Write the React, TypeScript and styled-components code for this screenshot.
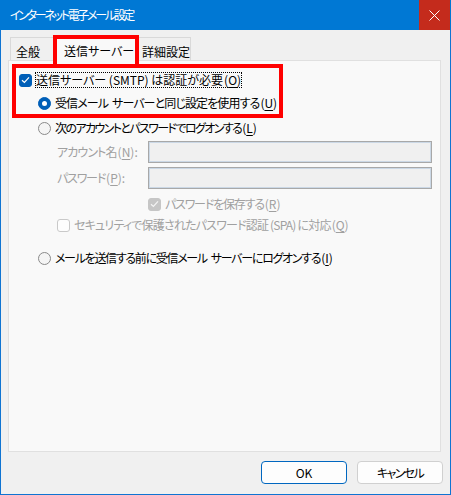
import React from "react";
import styled, { createGlobalStyle } from "styled-components";

const GlobalStyle = createGlobalStyle`
  html, body {
    margin: 0;
    padding: 0;
    background: #ffffff;
  }
  * {
    box-sizing: border-box;
  }
`

const Window = styled.div`
  position: relative;
  width: 451px;
  height: 495px;
  display: flex;
  flex-direction: column;
  background: #f0f0f0;
  border: 1px solid #0f74d2;
  border-top: none;
  font-family: "Noto Sans CJK JP", "Noto Sans", sans-serif;
  font-size: 12px;
  font-feature-settings: "palt";
  color: #000;
`

const TitleBar = styled.div`
  height: 30px;
  margin: 0 -1px;
  display: flex;
  align-items: center;
  justify-content: space-between;
  background: #0078d4;
  color: #fff;
  flex-shrink: 0;
`

const Title = styled.div`
  padding-left: 10px;
  line-height: 16px;
  letter-spacing: -2.3px;
`

const CloseButton = styled.div`
  width: 31px;
  height: 30px;
  margin-right: 1px;
  display: flex;
  align-items: center;
  justify-content: center;
  background: #c42b1c;
`

const TabStrip = styled.div`
  height: 30px;
  display: flex;
  align-items: flex-end;
  padding-left: 9px;
  flex-shrink: 0;
`

const Tab = styled.div<{ $active?: boolean; $w: number }>`
  position: relative;
  width: ${p => p.$w}px;
  height: ${p => (p.$active ? 26 : 23)}px;
  margin-bottom: ${p => (p.$active ? -1 : 0)}px;
  z-index: ${p => (p.$active ? 1 : 0)};
  padding: ${p => (p.$active ? "7px 0 0 8px" : "6px 0 0 5px")};
  line-height: 16px;
  white-space: nowrap;
  background: ${p => (p.$active ? "#f9f9f9" : "#f0f0f0")};
  border: 1px solid #d9d9d9;
  border-bottom: none;
`

const Panel = styled.div`
  flex: 1;
  margin: 0 9px 0 7px;
  padding: 0 8px 0 10px;
  display: flex;
  flex-direction: column;
  background: #f9f9f9;
  border: 1px solid #e0e0e0;
`

const Row = styled.div<{ $indent: number; $top: number }>`
  display: flex;
  align-items: center;
  height: 16px;
  margin-top: ${p => p.$top}px;
  padding-left: ${p => p.$indent}px;
  white-space: nowrap;
`

const Box = styled.span<{ $checked?: boolean; $disabled?: boolean }>`
  width: 13px;
  height: 13px;
  margin-right: 3px;
  flex-shrink: 0;
  display: flex;
  align-items: center;
  justify-content: center;
  border-radius: 3px;
  background: ${p =>
    p.$checked ? (p.$disabled ? "#c6c6c6" : "#005fb8") : "#fdfdfd"};
  border: 1px solid
    ${p => (p.$checked ? (p.$disabled ? "#c6c6c6" : "#005fb8") : p.$disabled ? "#c9c9c9" : "#8a8a8a")};
`

const Radio = styled.span<{ $checked?: boolean }>`
  position: relative;
  width: 13px;
  height: 13px;
  margin-right: 3px;
  flex-shrink: 0;
  border-radius: 50%;
  background: ${p => (p.$checked ? "#005fb8" : "#f5f5f5")};
  border: 1px solid ${p => (p.$checked ? "#005fb8" : "#8a8a8a")};

  &::after {
    content: "";
    display: ${p => (p.$checked ? "block" : "none")};
    position: absolute;
    left: 3px;
    top: 3px;
    width: 5px;
    height: 5px;
    border-radius: 50%;
    background: #fff;
  }
`

const Label = styled.span<{ $disabled?: boolean; $focus?: boolean; $ls?: number }>`
  line-height: 16px;
  padding: 0 1px;
  letter-spacing: ${p => p.$ls ?? 0}px;
  color: ${p => (p.$disabled ? "#a0a0a0" : "#000")};
  outline: ${p => (p.$focus ? "1px dotted #000" : "none")};
  outline-offset: -1px;
`

/* accelerator "(X)" keeps normal spacing */
const Key = styled.span`
  letter-spacing: 0;
  margin-left: 1px;

  u {
    text-underline-offset: 2px;
  }
`

const Space = styled.span`
  display: inline-block;
  width: 4px;
`

const FieldRow = styled.div<{ $top: number }>`
  display: flex;
  align-items: center;
  height: 22px;
  margin-top: ${p => p.$top}px;
  padding-left: 38px;
`

const FieldLabel = styled.span<{ $ls: number }>`
  width: 91px;
  color: #a0a0a0;
  line-height: 16px;
  letter-spacing: ${p => p.$ls}px;
  white-space: nowrap;
`

const TextBox = styled.div`
  width: 284px;
  height: 22px;
  background: #f0f0f0;
  border: 1px solid #a8a8a8;
  box-shadow: inset 0 0 0 1px #cbd8e6;
`

const Footer = styled.div`
  height: 42px;
  flex-shrink: 0;
  display: flex;
  justify-content: flex-end;
  align-items: flex-start;
  gap: 10px;
  padding: 9px 7px 0 0;
`

const Button = styled.div<{ $primary?: boolean; $ls?: number }>`
  width: 86px;
  height: 23px;
  display: flex;
  align-items: center;
  justify-content: center;
  line-height: 16px;
  letter-spacing: ${p => p.$ls ?? 0}px;
  background: #fdfdfd;
  border-radius: 4px;
  border: 1px solid ${p => (p.$primary ? "#0067c0" : "#d0d0d0")};
`

const Highlight = styled.div<{ $x: number; $y: number; $w: number; $h: number }>`
  position: absolute;
  left: ${p => p.$x}px;
  top: ${p => p.$y}px;
  width: ${p => p.$w}px;
  height: ${p => p.$h}px;
  border: 4px solid #ff0000;
  pointer-events: none;
  z-index: 5;
`

const Check = ({ color }: { color: string }) => (
  <svg width="9" height="8" viewBox="0 0 9 8">
    <path d="M1 4.2 L3.4 6.5 L8 1.4" fill="none" stroke={color} strokeWidth="1.2" />
  </svg>
)

const Acc = ({ k }: { k: string }) => (
  <Key>
    (<u>{k}</u>)
  </Key>
)

export default function App() {
  return (
    <>
      <GlobalStyle />
      <Window>
        <TitleBar>
          <Title>インターネット電子メール設定</Title>
          <CloseButton>
            <svg width="11" height="11" viewBox="0 0 11 11">
              <path d="M0.5 0.5 L10.5 10.5 M10.5 0.5 L0.5 10.5" stroke="#fff" strokeWidth="1" />
            </svg>
          </CloseButton>
        </TitleBar>

        <TabStrip>
          <Tab $w={45}>全般</Tab>
          <Tab $w={81} $active>送信サーバー</Tab>
          <Tab $w={55}>詳細設定</Tab>
        </TabStrip>

        <Panel>
          <Row $indent={0} $top={11}>
            <Box $checked><Check color="#fff" /></Box>
            <Label $focus>送信サーバー (SMTP) は認証が必要<Acc k="O" /></Label>
          </Row>
          <Row $indent={19} $top={7}>
            <Radio $checked />
            <Label $ls={-0.9}>受信メール<Space />サーバーと同じ設定を使用する<Acc k="U" /></Label>
          </Row>
          <Row $indent={19} $top={9}>
            <Radio />
            <Label $ls={-1.6}>次のアカウントとパスワードでログオンする<Acc k="L" /></Label>
          </Row>
          <FieldRow $top={5}>
            <FieldLabel $ls={-0.9}>アカウント名<Acc k="N" />:</FieldLabel>
            <TextBox />
          </FieldRow>
          <FieldRow $top={4}>
            <FieldLabel $ls={-1.2}>パスワード<Acc k="P" />:</FieldLabel>
            <TextBox />
          </FieldRow>
          <Row $indent={129} $top={7}>
            <Box $checked $disabled><Check color="#f4f4f4" /></Box>
            <Label $disabled $ls={-1.2}>パスワードを保存する<Acc k="R" /></Label>
          </Row>
          <Row $indent={38} $top={5}>
            <Box $disabled />
            <Label $disabled $ls={-0.8}>セキュリティで保護されたパスワード認証 (SPA) に対応<Acc k="Q" /></Label>
          </Row>
          <Row $indent={19} $top={17}>
            <Radio />
            <Label $ls={-1.3}>メールを送信する前に受信メール<Space />サーバーにログオンする<Acc k="I" /></Label>
          </Row>
        </Panel>

        <Footer>
          <Button $primary>OK</Button>
          <Button $ls={-1.6}>キャンセル</Button>
        </Footer>

        <Highlight $x={52} $y={35} $w={86} $h={33} />
        <Highlight $x={11} $y={64} $w={271} $h={54} />
      </Window>
    </>
  );
}
